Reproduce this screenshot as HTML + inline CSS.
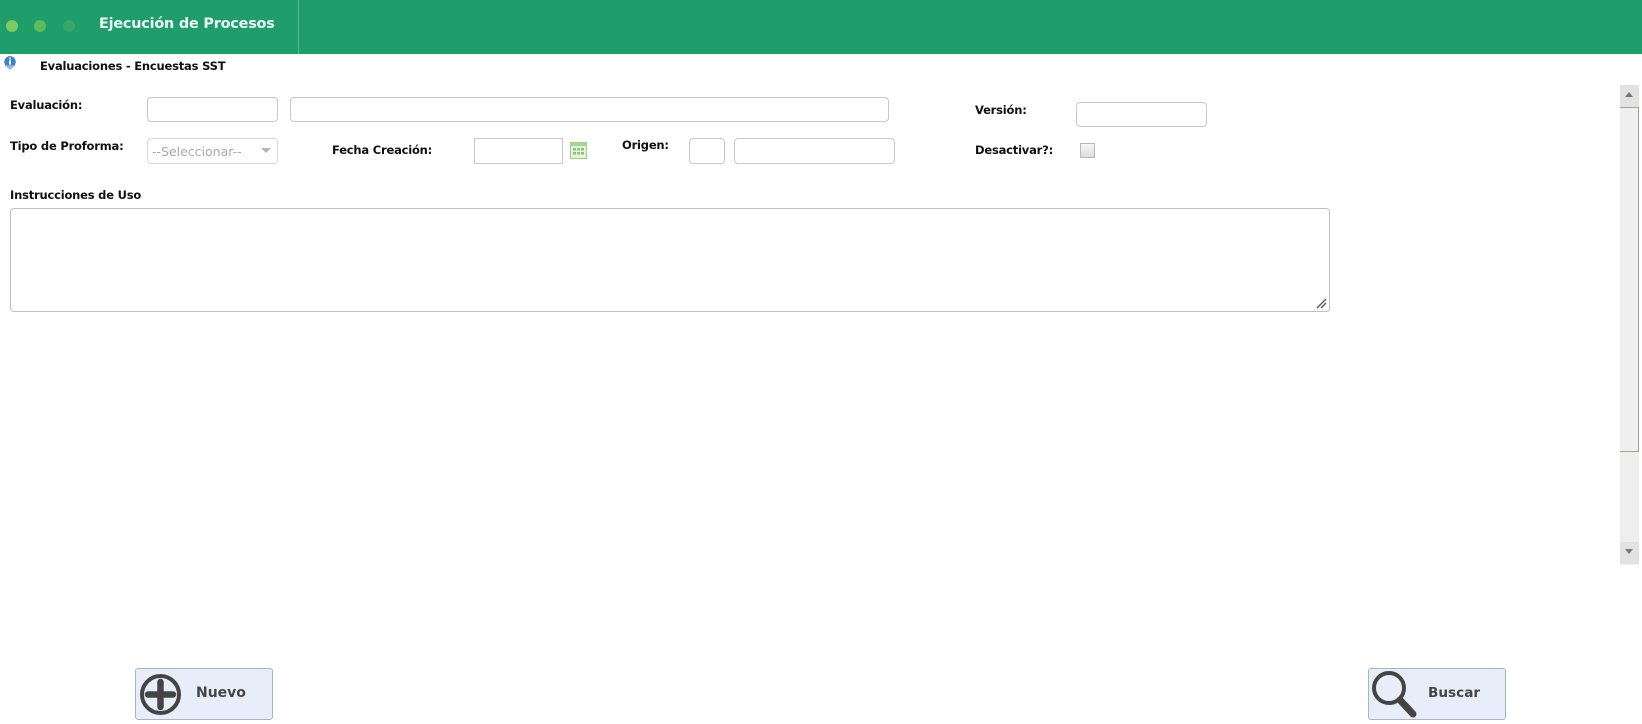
<!DOCTYPE html>
<html><head><meta charset="utf-8"><style>
*{box-sizing:border-box;margin:0;padding:0}
body{width:1642px;height:724px;background:#fff;position:relative;overflow:hidden;font-family:"DejaVu Sans","Liberation Sans",sans-serif;color:#111}
.a{position:absolute}
.hdr{left:0;top:0;width:1642px;height:54px;background:#1f9d6b}
.dot{width:12px;height:12px;border-radius:50%;top:20px}
.lbl{font-size:11.5px;font-weight:bold;letter-spacing:-0.2px}
.inp{border:1px solid #c8c8c8;border-radius:4px;background:#fff}
.btn{border:1px solid #a9b3c6;border-radius:3px;background:#e8eef9}
</style></head><body>
<div class="a hdr"></div>
<div class="a dot" style="left:6px;background:#7fc95d"></div>
<div class="a dot" style="left:34px;background:#5bbb5e"></div>
<div class="a dot" style="left:63px;background:#33a964"></div>
<div class="a" style="left:298px;top:0;width:1px;height:54px;background:#4fb88c"></div>
<div class="a" style="left:99px;top:16px;font-size:14.4px;font-weight:bold;color:#eef8f2;letter-spacing:-0.2px">Ejecución de Procesos</div>
<svg class="a" style="left:2px;top:55px" width="16" height="16" viewBox="0 0 14 14"><circle cx="7" cy="6" r="5" fill="#3e7fd0"/><path d="M2 9 L7 13 L12 9" fill="#9bb7e0"/><rect x="6.2" y="4.5" width="1.6" height="4" fill="#fff"/><rect x="6.2" y="2.3" width="1.6" height="1.5" fill="#fff"/></svg>
<div class="a lbl" style="left:40px;top:59px">Evaluaciones - Encuestas SST</div>

<div class="a lbl" style="left:10px;top:98px">Evaluación:</div>
<div class="a inp" style="left:147px;top:97px;width:131px;height:25px"></div>
<div class="a inp" style="left:290px;top:97px;width:599px;height:25px"></div>
<div class="a lbl" style="left:975px;top:103px">Versión:</div>
<div class="a inp" style="left:1076px;top:102px;width:131px;height:25px"></div>

<div class="a lbl" style="left:10px;top:139px">Tipo de Proforma:</div>
<div class="a inp" style="left:147px;top:138px;width:131px;height:26px;border-color:#d8d8d8"></div>
<div class="a" style="left:152px;top:144px;font-size:12.5px;color:#a8a8a8">--Seleccionar--</div>
<div class="a" style="left:261px;top:148px;width:0;height:0;border-left:5px solid transparent;border-right:5px solid transparent;border-top:5px solid #b5b5b5"></div>
<div class="a lbl" style="left:332px;top:143px">Fecha Creación:</div>
<div class="a" style="left:474px;top:138px;width:89px;height:26px;border:1px solid #c8c8c8"></div>
<svg class="a" style="left:570px;top:142px" width="17" height="17" viewBox="0 0 17 17"><rect x="0.5" y="0.5" width="16" height="16" fill="#e3f2dc" stroke="#9ccf8a"/><rect x="1" y="1" width="15" height="3" fill="#a8d595"/><g fill="#8cc476"><rect x="3" y="6" width="3" height="2.5"/><rect x="7" y="6" width="3" height="2.5"/><rect x="11" y="6" width="3" height="2.5"/><rect x="3" y="10" width="3" height="2.5"/><rect x="7" y="10" width="3" height="2.5"/><rect x="11" y="10" width="3" height="2.5"/></g></svg>
<div class="a lbl" style="left:622px;top:138px">Origen:</div>
<div class="a inp" style="left:689px;top:138px;width:36px;height:26px"></div>
<div class="a inp" style="left:734px;top:138px;width:161px;height:26px"></div>
<div class="a lbl" style="left:975px;top:143px">Desactivar?:</div>
<div class="a" style="left:1080px;top:143px;width:15px;height:15px;border:1px solid #b8b8b8;background:linear-gradient(#f6f6f6,#dcdcdc)"></div>

<div class="a lbl" style="left:10px;top:188px">Instrucciones de Uso</div>
<div class="a inp" style="left:10px;top:208px;width:1320px;height:104px;border-color:#c0c0c0"></div>
<svg class="a" style="left:1316px;top:298px" width="11" height="11" viewBox="0 0 11 11"><path d="M1 10 L10 1 M5 10 L10 5" stroke="#555" stroke-width="1.3"/></svg>

<div class="a" style="left:1620px;top:85px;width:19px;height:480px;background:#eeeeee"></div>
<div class="a" style="left:1620px;top:85px;width:19px;height:22px;background:#e2e2e2"></div>
<div class="a" style="left:1625px;top:92px;width:0;height:0;border-left:4px solid transparent;border-right:4px solid transparent;border-bottom:5px solid #777"></div>
<div class="a" style="left:1620px;top:107px;width:19px;height:345px;background:#efefef;border-top:1px solid #9aab84;border-right:1px solid #9aab84;border-bottom:1px solid #9aab84"></div>
<div class="a" style="left:1620px;top:542px;width:19px;height:22px;background:#e2e2e2"></div>
<div class="a" style="left:1625px;top:549px;width:0;height:0;border-left:4px solid transparent;border-right:4px solid transparent;border-top:5px solid #777"></div>

<div class="a btn" style="left:135px;top:668px;width:138px;height:52px"></div>
<svg class="a" style="left:139px;top:673px" width="43" height="43" viewBox="0 0 43 43"><circle cx="21.5" cy="21.5" r="18.5" fill="none" stroke="#444" stroke-width="4"/><path d="M21.5 9 V34 M9 21.5 H34" stroke="#444" stroke-width="6.5" stroke-linecap="round"/></svg>
<div class="a" style="left:196px;top:685px;font-size:14px;font-weight:bold;color:#444">Nuevo</div>

<div class="a btn" style="left:1368px;top:668px;width:138px;height:52px"></div>
<svg class="a" style="left:1371px;top:670px" width="48" height="50" viewBox="0 0 48 50"><circle cx="18" cy="18" r="15" fill="none" stroke="#444" stroke-width="4"/><path d="M29 30 L42 44" stroke="#444" stroke-width="7" stroke-linecap="round"/></svg>
<div class="a" style="left:1428px;top:685px;font-size:13.6px;font-weight:bold;color:#444">Buscar</div>
</body></html>
